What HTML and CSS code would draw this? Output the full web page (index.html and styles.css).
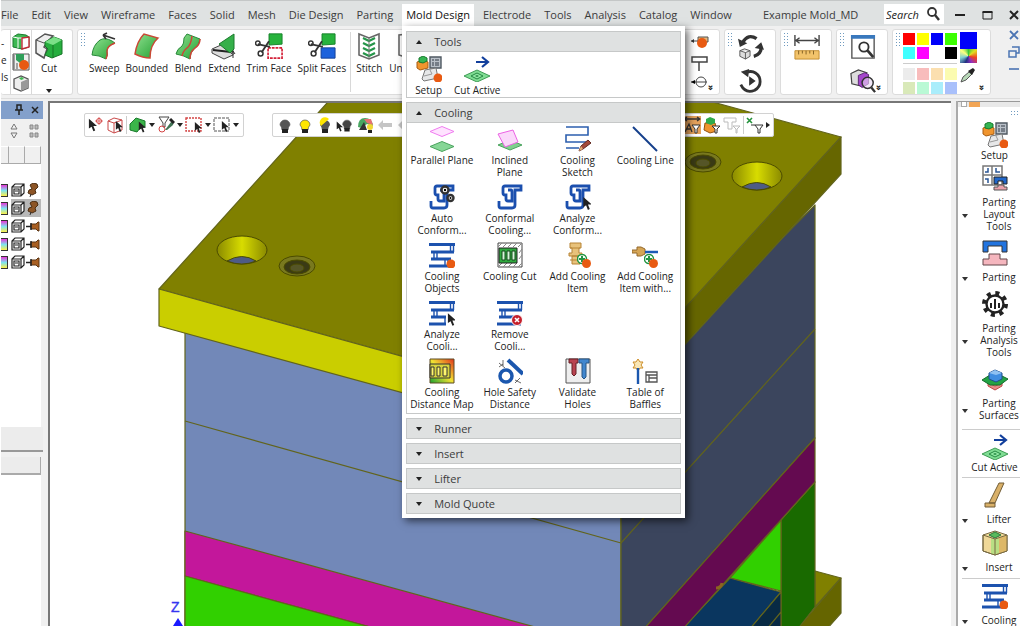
FILE: index.html
```html
<!DOCTYPE html>
<html lang="en">
<head>
<meta charset="utf-8">
<title>Example Mold_MD</title>
<link rel="stylesheet" href="styles.css">
</head>
<body>
<svg class="defs" aria-hidden="true">
  <defs>
    <linearGradient id="gr" x1="0" y1="0" x2="1" y2="1"><stop offset="0" stop-color="#8fe08f"/><stop offset="1" stop-color="#22a032"/></linearGradient>
    <linearGradient id="yl" x1="0" x2="1"><stop offset="0" stop-color="#8a8a00"/><stop offset=".5" stop-color="#d8dc00"/><stop offset="1" stop-color="#8a8a00"/></linearGradient>
    <linearGradient id="heat" x1="0" y1="1" x2="1" y2="0"><stop offset="0" stop-color="#16a030"/><stop offset=".5" stop-color="#f2e233"/><stop offset="1" stop-color="#e0301c"/></linearGradient>
  </defs>
  <symbol id="cursor" viewBox="0 0 10 14"><path d="M1 0v11l3-2 2 5 2-1-2-5h4z" fill="#222"/></symbol>
  <symbol id="setup" viewBox="0 0 26 26"><path d="M1 6l7-2 4 2v6l-8 2-3-2z" fill="#f0952e" stroke="#a85d12"/><path d="M3 6V2l4-2 4 2v3L7 7z" fill="#35b552" stroke="#177a2c"/><path d="M14 1h11v11H14z" fill="#b9c0c8" stroke="#4f5861" stroke-width="1.4"/><path d="M16 4h2m1 0h4m-7 3h2m1 0h4m-7 2h2m1 0h4" stroke="#333b46"/><path d="M9 14l11-2 2 10-14 3-2-2z" fill="#e6e7e8" stroke="#777"/><path d="M13 12l3 6-8 2" fill="none" stroke="#999"/><circle cx="22" cy="22" r="4.500" fill="#e85a12"/></symbol>
  <symbol id="cutactive" viewBox="0 0 26 26"><path d="M12 6h11M18 1l6 5-6 5" fill="none" stroke="#123f9c" stroke-width="2.2"/><path d="M0 20l13-6 13 6-13 6z" fill="#7fdc93" stroke="#3f9c55"/><path d="M7 20l6-3 6 3-6 3z" fill="#8fe7a2" stroke="#268943"/><path d="M11 20l2-1 2 1-2 1z" fill="#268943"/></symbol>
  <symbol id="parallel" viewBox="0 0 26 26"><path d="M1 5.500l12-5 12 5-12 5z" fill="#ffe3ff" stroke="#f07cf0"/><path d="M1 20.500l12-5 12 5-12 5z" fill="#86d696" stroke="#4aa35e"/></symbol>
  <symbol id="inclined" viewBox="0 0 26 26"><path d="M1 19l12-5 12 5-12 5z" fill="#7fd08e" stroke="#4aa35e"/><path d="M1 8l15-4 5 12-13 5z" fill="#fbd8fb" stroke="#ec62e4"/></symbol>
  <symbol id="sketch" viewBox="0 0 26 26"><path d="M1 1h22v8H1v7h22M1 22h13" fill="none" stroke="#2d5fae" stroke-width="1.600"/><path d="M14 25l2-5 7-6 3 3-8 6z" fill="#a44a3a" stroke="#632a22"/><path d="M14 25l2-5 2 3z" fill="#e5b078"/></symbol>
  <symbol id="line" viewBox="0 0 26 26"><path d="M1 1l24 24" stroke="#153f8b" stroke-width="2"/></symbol>
  <symbol id="conf" viewBox="0 0 26 26"><path d="M2 17v5q0 2 2 2h11q3 0 3-3V6h6V2H8Q6 2 6 4v5q0 2 2 2h1v4q0 2 2 2h4V8q0-2-1-2h-3" fill="none" stroke="#1b4fae" stroke-width="2.800"/></symbol>
  <symbol id="autoconf" viewBox="0 0 26 26"><use href="#conf"/><circle cx="16" cy="6" r="3.500" fill="#fff" stroke="#333" stroke-width="2.400"/><circle cx="16" cy="6" r="1.200"/><circle cx="21.500" cy="14" r="3" fill="#fff" stroke="#333" stroke-width="2.400"/><circle cx="21.500" cy="14" r="1"/></symbol>
  <symbol id="anconf" viewBox="0 0 26 26"><use href="#conf"/><use href="#cursor" x="17" y="13" width="10" height="13"/></symbol>
  <symbol id="pipes" viewBox="0 0 26 26"><path d="M0 2.500h26M2 10h23M2 17h20M0 24h24" fill="none" stroke="#1c52ae" stroke-width="3"/><path d="M21.500 3v7M24.500 3v7M5 10v7M8 10v7M16 17v7M19 17v7" fill="none" stroke="#1c52ae" stroke-width="1.400"/></symbol>
  <symbol id="objects" viewBox="0 0 26 26"><use href="#pipes"/><circle cx="22" cy="22" r="4.500" fill="#e85a12"/></symbol>
  <symbol id="analyze" viewBox="0 0 26 26"><use href="#pipes"/><path d="M17 12h9v14h-9z" fill="#fff"/><use href="#cursor" x="18" y="13" width="9" height="13"/></symbol>
  <symbol id="remove" viewBox="0 0 26 26"><use href="#pipes"/><circle cx="20" cy="20" r="5.500" fill="#c5202c" stroke="#fff"/><path d="M18 18l4 4m0-4l-4 4" stroke="#fff" stroke-width="1.600"/></symbol>
  <symbol id="cut" viewBox="0 0 26 26"><path d="M1 1h24v24H1z" fill="#fff" stroke="#444"/><path d="M1 5l4-4m1 4l4-4m1 4l4-4m1 4l4-4m1 4l4-4M1 25l4-4m1 4l4-4m1 4l4-4m1 4l4-4m1 4l4-4m-3-4l3-4m-3-2l3-4" stroke="#888"/><path d="M2 6h18v15H2z" fill="#2fa83e" stroke="#222"/><path d="M5 9h3v9H5zm5 0h3v9h-3zm5 0h3v9h-3z" fill="#d6f5d9" stroke="#16461d"/></symbol>
  <symbol id="plus" viewBox="0 0 14 14"><circle cx="5" cy="5" r="4.500" fill="#fff" stroke="#239544" stroke-width="1.500"/><path d="M5 2v6M2 5h6" stroke="#239544" stroke-width="2"/><circle cx="9.500" cy="9.500" r="4.500" fill="#e85a12"/></symbol>
  <symbol id="additem" viewBox="0 0 26 26"><path d="M5 1h11v5h-2v5h3v3H4v-3h3V6H5zM7 14h8v8H7z" fill="#e8c27b" stroke="#b78436"/><path d="M5 6h10M5 18h11" stroke="#b78436"/><use href="#plus" x="12" y="12" width="14" height="14"/></symbol>
  <symbol id="addwith" viewBox="0 0 26 26"><path d="M0 8h5V5h4l4 2v5l-4 2H5v-3H0z" fill="#d5a556" stroke="#94682a"/><path d="M13 10h13" stroke="#1c5ab5" stroke-width="2.500"/><use href="#plus" x="12" y="12" width="14" height="14"/></symbol>
  <symbol id="map" viewBox="0 0 26 26"><path d="M1 1h24v24H1z" fill="url(#heat)" stroke="#5d4b24"/><path d="M1 6h20v14H1z" fill="#d7d33f" stroke="#333"/><path d="M2 9h3v9H2zm6 0h3v9H8zm6 0h4v9h-4z" fill="#fff66d" stroke="#333"/></symbol>
  <symbol id="safety" viewBox="0 0 26 26"><circle cx="9" cy="18" r="6" fill="#fff" stroke="#1b57ae" stroke-width="3.500"/><path d="M11 2l15 14" stroke="#1b57ae" stroke-width="4"/><path d="M2 5l6 5M6 2v6m-4 1l4-3m12 16l6 3m-6 0l5-5" stroke="#444" stroke-width=".8"/></symbol>
  <symbol id="validate" viewBox="0 0 26 26"><path d="M1 1h24v24H1z" fill="#eee" stroke="#555"/><path d="M4 1h9v4h-2v11l-2 2-2-2V5H4z" fill="#b94350" stroke="#642027"/><path d="M14 1h10v4h-3v14l-2 2-2-2V5h-3z" fill="#4287ce" stroke="#285684"/></symbol>
  <symbol id="baffle" viewBox="0 0 26 26"><path d="M6 1l2 3h3L9 7l2 3H8l-2 3-2-3H1l2-3-2-3h3z" fill="#f9e7b7" stroke="#cc8d29"/><path d="M6 10v16" stroke="#1b57ae" stroke-width="2.400"/><path d="M14 14h11v10H14zM14 17h11m-8 0v7m0-4h8" fill="#fff" stroke="#555" stroke-width="1.300"/></symbol>

  <symbol id="cutcube" viewBox="0 0 28 28"><path d="M1 8l9-6 8 2-6 6-3 5 3 2-3 9-8-5z" fill="#eee" stroke="#555" stroke-width="1.500"/><path d="M1 8l8 3M9 11l3-1" stroke="#555"/><path d="M10 10l9-5 8 3v14l-10 4-7-3 3-6-3-3z" fill="#26ae3e" stroke="#167427"/><path d="M10 10l8 3 9-5-8-3z" fill="#7be088"/><path d="M18 13v13" stroke="#167427"/></symbol>
  <symbol id="sweep" viewBox="0 0 28 28"><path d="M2 23Q3 13 10 8q5-3 12 1 3 2 3 2-8 3-8 8 1 4-1 8-7-4-14-4z" fill="url(#gr)" stroke="#28893a"/><path d="M16 27q2-4 1-8 0-5 8-8" fill="none" stroke="#cf4337" stroke-width="1.400"/><path d="M13 3l12 4M13 3l4-2m-4 2l3 4" fill="none" stroke="#333" stroke-width="1.600"/></symbol>
  <symbol id="bounded" viewBox="0 0 28 28"><path d="M2 22Q4 9 11 2l14 4q-8 7-8 20-7 0-15-4z" fill="url(#gr)" stroke="#c94935" stroke-width="1.500"/></symbol>
  <symbol id="blend" viewBox="0 0 28 28"><path d="M2 22q1-5 6-8 2-2 2-8l3-4 13 5q0 6-6 10-4 3-4 10-7-4-14-5z" fill="url(#gr)" stroke="#28893a"/><path d="M8 24q1-5 5-8 4-3 5-12M16 27q0-7 4-10 6-4 6-10" fill="none" stroke="#cf4337" stroke-width="1.500"/></symbol>
  <symbol id="extend" viewBox="0 0 28 28"><path d="M2 17l9-4 12 5v5l-9 4-12-6z" fill="#ddd" stroke="#444"/><path d="M3 18l18 2" stroke="#222" stroke-width="2"/><path d="M9 12L24 2v15l-4 4z" fill="#35b04a" stroke="#1b7a2c"/><path d="M23 26v-7m-2 3l2-3 2 3" stroke="#333" fill="none"/></symbol>
  <symbol id="scissors" viewBox="0 0 16 28"><path d="M3 12l13 3M7 21l8-12" stroke="#333" stroke-width="2"/><circle cx="3" cy="11" r="2.400" fill="none" stroke="#333" stroke-width="1.600"/><circle cx="6" cy="22" r="2.600" fill="none" stroke="#333" stroke-width="1.600"/></symbol>
  <symbol id="trim" viewBox="0 0 30 28"><path d="M15 1h14v11l-14 1z" fill="#27b33c" stroke="#17802a"/><path d="M14 16h15v11H14z" fill="#fff" stroke="#d32038" stroke-width="1.800" stroke-dasharray="3 1"/><use href="#scissors" width="16" height="28"/></symbol>
  <symbol id="split" viewBox="0 0 30 28"><path d="M15 1h14v11l-14 1z" fill="#27b33c" stroke="#17802a"/><path d="M14 16h15v11H14z" fill="#1d62dc" stroke="#123e96"/><use href="#scissors" width="16" height="28"/></symbol>
  <symbol id="stitch" viewBox="0 0 28 28"><path d="M4 2l10 4 10-4v21l-10 4-10-4z" fill="#fff" stroke="#666" stroke-width="1.600"/><path d="M8 6l6 3 6-3M8 11l6 3 6-3M8 16l6 3 6-3M8 21l6 3 6-3" fill="none" stroke="#26964a" stroke-width="2.200"/><path d="M14 6v20" stroke="#777"/></symbol>
  <symbol id="unst" viewBox="0 0 28 28"><path d="M13 2l-9 1v20l9 3M16 2l9 1v20l-9 3" fill="none" stroke="#666" stroke-width="1.600"/></symbol>
  <symbol id="s1" viewBox="0 0 18 18"><path d="M1 5l5-3 8 1 3 2v10l-7 2-9-2z" fill="#3cb852" stroke="#197b2e"/><path d="M6 6h4v10M1 5l5 1v10" fill="none" stroke="#fff"/><path d="M10 6l7-1v10l-7 2z" fill="#fff" stroke="#c12b37" stroke-width="1.400"/></symbol>
  <symbol id="s2" viewBox="0 0 18 18"><path d="M1 1h16v16H1z" fill="#eee" stroke="#555"/><path d="M4 1h8v6l-4 3-4-3z" fill="#2f9f5a"/><path d="M2 2v14m3-6v6" stroke="#555"/><circle cx="12" cy="12" r="5" fill="#e85a12"/></symbol>
  <symbol id="s3" viewBox="0 0 18 18"><path d="M2 5l7-3 7 3v9l-7 3-7-3z" fill="#eee" stroke="#555" stroke-width="1.300"/><path d="M9 8l7-3v9l-7 3z" fill="#999"/><path d="M7 4l3-1 2 2-3 1z" fill="#3fb851"/></symbol>
  <symbol id="orbit" viewBox="0 0 28 28"><path d="M5 9Q11-1 20 5M25 14q0 8-8 10" fill="none" stroke="#333" stroke-width="3.600"/><path d="M0 5l2 9 8-4zM28 17l-3-8-7 6z" fill="#333"/><path d="M2 18l5-2 6 2v6l-5 3-6-3zM8 20v7m-6-9l6 2 5-2" fill="#ddd" stroke="#555"/></symbol>
  <symbol id="replay" viewBox="0 0 28 28"><path d="M8 5q10-4 15 5 3 9-5 14-10 4-15-6" fill="none" stroke="#333" stroke-width="3"/><path d="M3 4l9-3-1 9zM12 9l7 5-7 5z" fill="#333"/></symbol>
  <symbol id="ruler" viewBox="0 0 28 28"><path d="M1 1v12M27 1v12M2 7h24M6 4L2 7l4 3M22 4l4 3-4 3" fill="none" stroke="#444" stroke-width="1.500"/><path d="M1 18h26v9H1z" fill="#f2c36b" stroke="#c18a2c"/><path d="M5 18v4m4-4v3m4-3v4m4-4v3m4-3v4" stroke="#805d20"/></symbol>
  <symbol id="preview" viewBox="0 0 28 28"><path d="M2 2h24v24H2z" fill="#fff" stroke="#555" stroke-width="1.500"/><path d="M1 1h26v4H1z" fill="#3978bd"/><circle cx="15" cy="14" r="5" fill="none" stroke="#333" stroke-width="2"/><path d="M19 18l6 7" stroke="#333" stroke-width="3"/></symbol>
  <symbol id="find3d" viewBox="0 0 28 28"><path d="M1 6l8-4 9 3-4 4v11L2 17z" fill="#ddd" stroke="#444" stroke-width="1.300"/><path d="M9 8l7-3 4 2v10l-7 4-4-3z" fill="#a546cc" stroke="#562370"/><circle cx="19" cy="16" r="6" fill="#ead8f2" fill-opacity=".6" stroke="#333" stroke-width="1.600"/><path d="M23 21l4 5" stroke="#333" stroke-width="2.500"/></symbol>
  <symbol id="pipette" viewBox="0 0 16 16"><path d="M1 15l2-5 6-5 3 2-6 6z" fill="#b8d9b8" stroke="#555"/><path d="M8 4l4 4 3-5-2-2z" fill="#222"/></symbol>
  <symbol id="n1" viewBox="0 0 18 18"><path d="M0 8h7" stroke="#444"/><path d="M7 4h10v5H7z" fill="#e5b77a" stroke="#555"/><circle cx="11" cy="10" r="5" fill="#e85a12"/><path d="M0 8l3-2v4z" fill="#333"/></symbol>
  <symbol id="n2" viewBox="0 0 18 18"><path d="M1 4h15v5H1zM8 9v9" fill="none" stroke="#444" stroke-width="1.500"/></symbol>
  <symbol id="n3" viewBox="0 0 18 18"><path d="M0 9h16" stroke="#444"/><circle cx="10" cy="9" r="5" fill="none" stroke="#444"/><path d="M0 9l4-2v4z"/></symbol>

  <symbol id="layout" viewBox="0 0 26 26"><path d="M1 1h19v19H1zM10 1v19M1 10h19" fill="#fff" stroke="#777" stroke-width="1.500"/><path d="M3 7h3V3m8 0v4h4M3 14h3v4" fill="none" stroke="#2b5796" stroke-width="1.500"/><path d="M12 12h13v7h-4v-3h-5v3h-4z" fill="#2167ca" stroke="#222"/><path d="M12 25v-3h4v-2h6v2h3v3z" fill="#eaa2ac" stroke="#555"/></symbol>
  <symbol id="parting" viewBox="0 0 26 26"><path d="M1 1h24v11h-5V6H6v6H1z" fill="#2274df" stroke="#333"/><path d="M1 25v-6h6v-5h11v5h7v6z" fill="#f5b6be" stroke="#63474a"/></symbol>
  <symbol id="gear" viewBox="0 0 26 26"><circle cx="13" cy="13" r="11" fill="none" stroke="#222" stroke-width="4" stroke-dasharray="4 4.640"/><circle cx="13" cy="13" r="8.500" fill="#fff" stroke="#222" stroke-width="2.400"/><path d="M9 12v5m4-9v10m4-6v5" stroke="#222" stroke-width="2"/></symbol>
  <symbol id="surfaces" viewBox="0 0 26 26"><path d="M6 17l7 3 7-3v3l-7 4-7-4z" fill="#e58d89" stroke="#c04644"/><path d="M0 14l8-5h10l8 4-8 6H8z" fill="#23a344" stroke="#156c2b"/><path d="M7 7l6-3 7 3v6l-6 3-7-3z" fill="#408de0" stroke="#204e8a"/><path d="M7 7l7 2 6-2-7-3z" fill="#8fc1f2"/></symbol>
  <symbol id="lifter" viewBox="0 0 26 26"><path d="M17 1h5l-9 20H7zM3 21h10v4H3z" fill="#d9b068" stroke="#725d36"/></symbol>
  <symbol id="insert" viewBox="0 0 26 26"><path d="M1 5l12-4 12 4v16l-12 4-12-4z" fill="#efd898" stroke="#786a43"/><path d="M13 9l12-4v16l-12 4z" fill="#ddb868"/><path d="M9 8l4 1 4-1v15l-4 2-4-1z" fill="#b9df84"/><path d="M7 5l6-3 6 3-6 3z" fill="#58ba5c" stroke="#28773c"/><path d="M1 5l12 4 12-4M13 9v16M1 5v16l12 4 12-4V5" fill="none" stroke="#786a43"/></symbol>

  <symbol id="pick1" viewBox="0 0 18 18"><use href="#cursor" x="2" y="2" width="9" height="14"/><circle cx="13" cy="5" r="2.500" fill="none" stroke="#d34444"/><path d="M13 1v8M9 5h8" stroke="#d34444" stroke-width=".7"/></symbol>
  <symbol id="pick2" viewBox="0 0 18 18"><path d="M2 5l6-3 8 2v10l-8 3-6-3zM2 5l6 2 8-3M8 7v10" fill="#fff" stroke="#c94949"/><use href="#cursor" x="9" y="5" width="8" height="11"/></symbol>
  <symbol id="pick3" viewBox="0 0 18 18"><path d="M1 14V8l6-6 9 3v6l-5 1-3 4z" fill="#3bb54a" stroke="#1b7b2d"/><use href="#cursor" x="9" y="5" width="8" height="12"/></symbol>
  <symbol id="pick4" viewBox="0 0 18 18"><path d="M2 1h10L8 7v4H6V7z" fill="#fff" stroke="#444"/><circle cx="5" cy="13" r="3" fill="none" stroke="#d34444"/><path d="M8 14l6-8 3-1-1 4-6 5z" fill="#427556"/><path d="M13 3l4 4" stroke="#222" stroke-width="3"/></symbol>
  <symbol id="pick5" viewBox="0 0 18 18"><path d="M1 2h15v13H1z" fill="none" stroke="#d34444" stroke-width="1.400" stroke-dasharray="2 1"/><use href="#cursor" x="9" y="6" width="8" height="11"/></symbol>
  <symbol id="pick6" viewBox="0 0 18 18"><path d="M1 2h15v13H1z" fill="none" stroke="#555" stroke-dasharray="3 1"/><use href="#cursor" x="8" y="5" width="8" height="11"/></symbol>
  <symbol id="bulb" viewBox="0 0 16 18"><path d="M5 14q0-3-2-5a5 5 0 1 1 10 0q-2 2-2 5z" stroke="#555" stroke-width=".7"/><path d="M5 13h6v4H5z" fill="#222"/></symbol>
  <symbol id="half" viewBox="0 0 16 18"><path d="M5 14q0-3-2-5a5 5 0 1 1 10 0q-2 2-2 5z" fill="#555"/><path d="M4 10a5 5 0 0 1 8-7z" fill="#ffe600"/><path d="M5 13h6v4H5z" fill="#222"/></symbol>
  <symbol id="bulbcur" viewBox="0 0 18 18"><use href="#bulb" x="4" fill="#444" width="14" height="17"/><use href="#cursor" x="0" y="5" width="7" height="11"/></symbol>
  <symbol id="palette" viewBox="0 0 18 18"><path d="M2 11Q2 2 9 2t8 8l-6-2-5 4z" fill="#48a661"/><path d="M8 3h7l2 6-6-2z" fill="#e67171"/><path d="M3 14l5-8 3 8z" fill="#333"/><circle cx="14" cy="11" r="3" fill="#f1d733"/><path d="M12 14h4v3h-4z" fill="#222"/></symbol>
  <symbol id="back" viewBox="0 0 16 18"><path d="M1 9l5-5v3h9v4H6v3z" fill="#c5c5c5"/></symbol>
  <symbol id="dimfilt" viewBox="0 0 18 18"><path d="M1 3h16M4 1L1 3l3 2m10-4l3 2-3 2M2 16L6 8l3 8m-5-3h4" fill="none" stroke="#333" stroke-width="1.300"/><path d="M9 9h8l-3 4v4h-2v-4z" fill="#fff" stroke="#333"/></symbol>
  <symbol id="objfilt" viewBox="0 0 18 18"><path d="M2 7h10l2 8-7 2-6-3z" fill="#f0952e" stroke="#935110"/><path d="M3 7V3l4-2 5 2v4l-4 2z" fill="#2fab4b"/><path d="M9 10h8l-3 3v4h-2v-4z" fill="#fff" stroke="#333"/></symbol>
  <symbol id="textfilt" viewBox="0 0 18 18"><path d="M1 2h12v4H9v7H5V6H1zM10 10h7l-3 3v4h-1v-4z" fill="#fff" stroke="#bbb"/></symbol>
  <symbol id="ptfilt" viewBox="0 0 18 18"><path d="M1 2l5 5m0-5L1 7" stroke="#23923b" stroke-width="1.600"/><path d="M5 9h4M9 9h8l-3 4v4h-2v-4z" fill="#fff" stroke="#333"/></symbol>
  <symbol id="box" viewBox="0 0 14 14"><path d="M1 4l3-3h9v9l-3 3H1zM1 4h9v9M10 4l3-3M3 6h5v5H3zM4 8h3" fill="#fff" stroke="#222" stroke-width="1.200"/></symbol>
  <symbol id="pinup" viewBox="0 0 14 14"><path d="M4 2l3-2 4 1 1 3-3 3 1 3-4 2-4-2 1-3 3-1z" fill="#8d5526" stroke="#4c2e12"/><path d="M5 11l-1 3" stroke="#333"/></symbol>
  <symbol id="pinside" viewBox="0 0 14 14"><path d="M5 5h5l2-2h1v9h-1l-2-2H5z" fill="#a85f22" stroke="#5b3412"/><path d="M0 7.500h5M5 4v7" stroke="#222" stroke-width="1.500"/></symbol>
</svg>

<div class="app">
  <header class="menubar">
    <nav class="menus">
      <button>File</button><button>Edit</button><button>View</button><button>Wireframe</button><button>Faces</button><button>Solid</button><button>Mesh</button><button>Die Design</button><button>Parting</button>
      <div class="tab">
        <button class="active" aria-expanded="true">Mold Design</button>
        <div class="dropdown">
          <section class="section">
            <button class="head"><i class="up"></i>Tools</button>
            <div class="tools">
              <button class="tile"><svg><use href="#setup"/></svg>Setup</button>
              <button class="tile"><svg><use href="#cutactive"/></svg>Cut Active</button>
            </div>
          </section>
          <section class="section">
            <button class="head"><i class="up"></i>Cooling</button>
            <div class="tiles">
              <button class="tile"><svg><use href="#parallel"/></svg>Parallel Plane</button>
              <button class="tile"><svg><use href="#inclined"/></svg>Inclined<br>Plane</button>
              <button class="tile"><svg><use href="#sketch"/></svg>Cooling<br>Sketch</button>
              <button class="tile"><svg><use href="#line"/></svg>Cooling Line</button>
              <button class="tile"><svg><use href="#autoconf"/></svg>Auto<br>Conform...</button>
              <button class="tile"><svg><use href="#conf"/></svg>Conformal<br>Cooling...</button>
              <button class="tile"><svg><use href="#anconf"/></svg>Analyze<br>Conform...</button>
              <button class="tile first"><svg><use href="#objects"/></svg>Cooling<br>Objects</button>
              <button class="tile"><svg><use href="#cut"/></svg>Cooling Cut</button>
              <button class="tile"><svg><use href="#additem"/></svg>Add Cooling<br>Item</button>
              <button class="tile"><svg><use href="#addwith"/></svg>Add Cooling<br>Item with...</button>
              <button class="tile"><svg><use href="#analyze"/></svg>Analyze<br>Cooli...</button>
              <button class="tile"><svg><use href="#remove"/></svg>Remove<br>Cooli...</button>
              <button class="tile first"><svg><use href="#map"/></svg>Cooling<br>Distance Map</button>
              <button class="tile"><svg><use href="#safety"/></svg>Hole Safety<br>Distance</button>
              <button class="tile"><svg><use href="#validate"/></svg>Validate<br>Holes</button>
              <button class="tile"><svg><use href="#baffle"/></svg>Table of<br>Baffles</button>
            </div>
          </section>
          <section class="section"><button class="head"><i class="down"></i>Runner</button></section>
          <section class="section"><button class="head"><i class="down"></i>Insert</button></section>
          <section class="section"><button class="head"><i class="down"></i>Lifter</button></section>
          <section class="section"><button class="head"><i class="down"></i>Mold Quote</button></section>
        </div>
      </div>
      <button>Electrode</button><button>Tools</button><button>Analysis</button><button>Catalog</button><button>Window</button>
    </nav>
    <span class="doc">Example Mold_MD</span>
    <label class="search"><input type="text" placeholder="Search" aria-label="Search"><svg viewBox="0 0 14 14"><circle cx="6" cy="5" r="4" fill="none" stroke="#333" stroke-width="1.800"/><path d="M9 8l4 5" stroke="#333" stroke-width="2.400"/></svg></label>
    <div class="winbtns">
      <button aria-label="Minimize"><svg viewBox="0 0 12 12"><path d="M1 6h10" stroke="#222" stroke-width="2"/></svg></button>
      <button aria-label="Maximize"><svg viewBox="0 0 12 12"><path d="M2 3h9v7H2z" fill="none" stroke="#222"/><path d="M1.500 3h10" stroke="#222" stroke-width="2"/></svg></button>
      <button aria-label="Close"><svg viewBox="0 0 12 12"><path d="M2 2l8 8m0-8l-8 8" stroke="#222" stroke-width="2"/></svg></button>
    </div>
  </header>

  <div class="ribbon">
    <div class="group g-first">
      <div class="stubs"><span>-</span><span>e</span><span>ls</span></div>
      <div class="small"><svg><use href="#s1"/></svg><svg><use href="#s2"/></svg><svg><use href="#s3"/></svg></div>
      <button class="rtool cutbtn"><svg><use href="#cutcube"/></svg>Cut<i class="down"></i></button>
    </div>
    <div class="group g-wide">
      <i class="grip"></i>
      <div class="rtools">
        <button class="rtool"><svg><use href="#sweep"/></svg>Sweep</button>
        <button class="rtool"><svg><use href="#bounded"/></svg>Bounded</button>
        <button class="rtool"><svg><use href="#blend"/></svg>Blend</button>
        <button class="rtool"><svg><use href="#extend"/></svg>Extend</button>
        <button class="rtool"><svg><use href="#trim"/></svg>Trim Face</button>
        <button class="rtool"><svg><use href="#split"/></svg>Split Faces</button>
        <i class="vline"></i>
        <button class="rtool"><svg><use href="#stitch"/></svg>Stitch</button>
        <button class="rtool"><svg><use href="#unst"/></svg>Unstitch</button>
      </div>
      <div class="small notes"><svg><use href="#n1"/></svg><svg><use href="#n2"/></svg><svg><use href="#n3"/></svg></div>
      <b class="more">»</b>
    </div>
    <div class="group g-mid"><i class="grip"></i><div class="pair"><svg><use href="#orbit"/></svg><svg><use href="#replay"/></svg></div></div>
    <div class="group g-mid"><i class="grip"></i><div class="pair"><svg><use href="#ruler"/></svg></div></div>
    <div class="group g-mid"><i class="grip"></i><div class="pair"><svg><use href="#preview"/></svg><svg><use href="#find3d"/></svg></div><b class="more">»</b></div>
    <div class="group g-color"><i class="grip"></i>
      <div class="swatches">
        <div class="row bright"><i class="c1"></i><i class="c2"></i><i class="c3"></i><i class="c4"></i><i class="c5"></i><i class="c6"></i><i class="c7"></i><i class="c8"></i></div>
        <div class="row"><i class="p1"></i><i class="p2"></i><i class="p3"></i><i class="p4"></i><i class="p5"></i><i class="p6"></i><i class="p7"></i><i class="p8"></i></div>
      </div>
      <div class="current"><i class="c3"></i><i class="wheel"></i><svg><use href="#pipette"/></svg></div>
      <b class="more">»</b>
    </div>
    <div class="mdi">
      <svg viewBox="0 0 12 12"><path d="M2 2l8 8m0-8l-8 8" stroke="#4b74b3" stroke-width="1.800"/></svg>
      <svg viewBox="0 0 12 12"><path d="M4 1h7v6H8M1 5h7v6H1z" fill="none" stroke="#4b74b3" stroke-width="1.500"/></svg>
      <svg viewBox="0 0 12 12"><path d="M1 6h10" stroke="#4b74b3" stroke-width="1.600"/></svg>
    </div>
  </div>

  <main class="work">
    <aside class="tree">
      <div class="title"><svg viewBox="0 0 10 12"><path d="M3 1h4v5H3zM1 6h8M5 6v5" fill="none" stroke="#222" stroke-width="1.500"/></svg><svg viewBox="0 0 10 12"><path d="M2 3l6 6m0-6L2 9" stroke="#222" stroke-width="1.500"/></svg></div>
      <div class="treebar"><svg viewBox="0 0 12 16"><path d="M3 6l3-5 3 5zM3 10l3 5 3-5z" fill="none" stroke="#777"/></svg><svg viewBox="0 0 12 16"><path d="M2 2h3v4H2zm5 0h3v4H7zM2 10h3v4H2zm5 0h3v4H7z" fill="#bbb" stroke="#888"/></svg></div>
      <div class="cols"><i></i><i></i><i></i></div>
      <ul class="rows">
        <li><i class="hue"></i><svg><use href="#box"/></svg><svg><use href="#pinup"/></svg></li>
        <li class="sel"><i class="hue"></i><svg><use href="#box"/></svg><svg><use href="#pinup"/></svg></li>
        <li><i class="hue"></i><svg><use href="#box"/></svg><svg><use href="#pinside"/></svg></li>
        <li><i class="hue"></i><svg><use href="#box"/></svg><svg><use href="#pinside"/></svg></li>
        <li><i class="hue"></i><svg><use href="#box"/></svg><svg><use href="#pinside"/></svg></li>
      </ul>
      <div class="foot"></div>
      <div class="field"></div>
      <div class="blank"></div>
    </aside>

    <div class="canvas">
      <svg class="model" viewBox="50 103 901 523" preserveAspectRatio="xMidYMin slice" role="img" aria-label="Mold base model">
        <g stroke="#62641c" stroke-width="1.200" stroke-linejoin="round">
          <path d="M815 571l26 7-26 29z" fill="#808000"/>
          <path d="M841 578l-45 52h30l15-17z" fill="#656500"/>
          <path d="M781 520l34-38v125l-18 23h-16z" fill="#196a00"/>
          <path d="M781 520v71l-51-13z" fill="#31d000"/>
          <path d="M730 578l51 14-32 38h-68z" fill="#0a365f"/>
          <path d="M781 592l-32 38h32zm0 20l-15 18" fill="#082a44"/>
          <path d="M185 320l436 100v210H185z" fill="#7288b8"/>
          <path d="M621 400l194-195v233L643 630h-22z" fill="#3b455d"/>
          <path d="M185 421l436 122 194-214" fill="none"/>
          <path d="M185 531v45l196 54h165z" fill="#c3179b"/>
          <path d="M185 576l196 54H185z" fill="#31d000"/>
          <path d="M815 438v44L682 630h-39z" fill="#640a50"/>
          <path d="M716 588q5 0 6-5" fill="none" stroke="#8b6420" stroke-width="3"/>
          <path d="M159 289l168-186V95h360l154 42-248 272z" fill="#808000"/>
          <path d="M159 289l434 120v36L159 326z" fill="#cace00"/>
          <path d="M841 137v37L593 445v-36z" fill="#666600"/>
        </g>
        <g stroke="#4b4b00">
          <ellipse cx="242" cy="250" rx="25" ry="14" fill="url(#yl)"/><path d="M227 261q15-9 29 0-14 6-29 0z" fill="#4e5b86"/>
          <ellipse cx="757" cy="176" rx="25" ry="14" fill="url(#yl)"/><path d="M742 187q15-9 29 0-14 6-29 0z" fill="#4e5b86"/>
          <ellipse cx="297" cy="266" rx="18" ry="10" fill="#79791f"/><ellipse cx="297" cy="267" rx="13" ry="7" fill="#3a3a15"/><ellipse cx="297" cy="268" rx="7" ry="4" fill="#555527"/>
          <ellipse cx="703" cy="162" rx="18" ry="10" fill="#79791f"/><ellipse cx="703" cy="162" rx="13" ry="7" fill="#3a3a15"/><ellipse cx="703" cy="163" rx="7" ry="4" fill="#555527"/>
        </g>
        <text class="axis" x="171" y="612">Z</text>
        <path d="M178 618l5 8h-10z" fill="#1a1aff"/>
      </svg>
      <div class="float pick">
        <svg><use href="#pick1"/></svg><svg><use href="#pick2"/></svg><i class="sep"></i>
        <svg><use href="#pick3"/></svg><i class="down"></i><svg><use href="#pick4"/></svg><i class="down"></i><svg><use href="#pick5"/></svg><i class="down"></i><svg><use href="#pick6"/></svg><i class="down"></i>
      </div>
      <div class="float show">
        <svg fill="#555"><use href="#bulb"/></svg><svg fill="#ffe600"><use href="#bulb"/></svg><svg><use href="#half"/></svg><svg><use href="#bulbcur"/></svg><svg><use href="#palette"/></svg><svg><use href="#back"/></svg><svg><use href="#back"/></svg>
        <span class="filters"><svg class="on"><use href="#dimfilt"/></svg><svg><use href="#objfilt"/></svg><svg><use href="#textfilt"/></svg><i class="sep"></i><svg><use href="#ptfilt"/></svg><i class="right"></i></span>
      </div>
    </div>

    <aside class="side">
      <div class="strip"><i></i><i class="orange"></i></div>
      <i class="hgrip"></i>
      <button class="stool"><svg><use href="#setup"/></svg><span>Setup</span></button>
      <button class="stool arrow"><svg><use href="#layout"/></svg><span>Parting<br>Layout<br>Tools</span></button>
      <button class="stool arrow"><svg><use href="#parting"/></svg><span>Parting</span></button>
      <button class="stool arrow"><svg><use href="#gear"/></svg><span>Parting<br>Analysis<br>Tools</span></button>
      <button class="stool arrow"><svg><use href="#surfaces"/></svg><span>Parting<br>Surfaces</span></button>
      <hr>
      <button class="stool"><svg><use href="#cutactive"/></svg><span>Cut Active</span></button>
      <hr>
      <button class="stool arrow tight"><svg><use href="#lifter"/></svg><span>Lifter</span></button>
      <button class="stool arrow tight"><svg><use href="#insert"/></svg><span>Insert</span></button>
      <hr>
      <button class="stool arrow tight"><svg><use href="#objects"/></svg><span>Cooling</span></button>
    </aside>
  </main>
</div>
</body>
</html>
```

FILE: styles.css
```css
* { box-sizing: border-box; }
body {
  margin: 0;
  padding: 0 4px 5px 1px;
  height: 100vh;
  background: #fff;
  color: #222;
  font: 10px/12px "Open Sans", "Noto Sans", sans-serif;
  overflow: hidden;
}
button {
  margin: 0; padding: 0; border: 0;
  background: none; color: inherit;
  font: inherit; white-space: nowrap;
}
svg { display: block; flex: none; }
.defs { position: absolute; width: 0; height: 0; }
.app { display: flex; flex-direction: column; height: 100%; background: #f0f0f0; overflow: hidden; }

.down, .up, .right { width: 0; height: 0; flex: none; border: 3px solid transparent; }
.down { border-top: 4px solid #222; border-bottom: 0; }
.up { border-bottom: 4px solid #222; border-top: 0; }
.right { border-left: 4px solid #222; border-right: 0; }

/* menu bar */
.menubar {
  display: flex; align-items: stretch; flex: none;
  height: 26px; padding-top: 3px;
  background: #dfe2e2; border-top: 1px solid #c4c7c7;
  font-size: 11px; color: #3c3c3c;
  position: relative; z-index: 5;
}
.menus { display: flex; margin-left: -6px; }
.menus > button { padding: 0 7px 0 6px; }
.tab { position: relative; display: flex; margin: 0 3px 0 2px; }
.active { background: #fff; padding: 0 4px; color: #111; }
.doc { margin-left: 24px; align-self: center; white-space: nowrap; }
.search {
  display: flex; align-items: center; flex: none;
  width: 60px; height: 20px; margin-left: auto; padding: 0 4px 0 2px;
  background: #fff;
}
.search input {
  flex: 1; min-width: 0; padding: 0; border: 0; background: none;
  font: italic 11px "Open Sans", "Noto Sans", sans-serif;
}
.search input::placeholder { color: #222; opacity: 1; }
.search svg { width: 14px; height: 14px; }
.winbtns { display: flex; align-items: center; gap: 15px; margin-left: 10px; }
.winbtns svg { width: 12px; height: 12px; }

/* drop-down panel */
.dropdown {
  position: absolute; top: 100%; left: 0; z-index: 10;
  display: flex; flex-direction: column; gap: 4px;
  width: 283px; padding: 5px 4px 4px;
  background: #fff; box-shadow: 3px 3px 8px rgba(0,0,0,.6);
  font-size: 10px; color: #222;
}
.section { border: 1px solid #c6c8c8; }
.head {
  display: flex; align-items: center; gap: 12px;
  width: 100%; height: 19px; padding-left: 9px;
  background: #dfe1e1; font-size: 11px; color: #3c3c3c;
}
.tools { display: flex; gap: 12px; height: 46px; padding: 1px 8px 0; border-top: 1px solid #c6c8c8; }
.tiles { display: grid; grid-template-columns: repeat(4, minmax(0, 1fr)); padding: 0 1px; border-top: 1px solid #c6c8c8; }
.tiles .tile { height: 58px; }
.tile { display: flex; flex-direction: column; align-items: center; padding-top: 3px; text-align: center; }
.tile svg { width: 26px; height: 26px; margin-bottom: 2px; }
.first { grid-column: 1; }

/* ribbon */
.ribbon { display: flex; gap: 4px; flex: none; height: 72px; padding: 3px 0; background: #f0f0f0; }
.group { position: relative; display: flex; flex: none; padding: 2px; background: #fff; border: 1px solid #dcdcdc; border-radius: 3px; overflow: hidden; }
.g-first { width: 72px; padding: 0; border-left: 0; }
.stubs { display: flex; flex-direction: column; justify-content: space-around; width: 9px; padding: 4px 0 8px; }
.small { display: flex; flex-direction: column; justify-content: space-around; padding: 0 2px; }
.small svg { width: 18px; height: 18px; }
.g-first .small { border: solid #d8d8d8; border-width: 0 1px; padding: 0 1px; }
.rtool { display: flex; flex-direction: column; align-items: center; }
.rtool svg { width: 28px; height: 28px; margin-bottom: 2px; }
.cutbtn { flex: 1; padding: 2px 6px 0 0; }
.cutbtn .down { margin-top: 15px; }
.g-wide { flex: 1; min-width: 0; }
.rtools { display: flex; gap: 6px; min-width: 0; flex: 1; padding-left: 2px; overflow: hidden; }
.vline { width: 1px; margin: 0 -2px; background: #d8d8d8; }
.grip {
  flex: none; width: 7px; height: 14px;
  background: radial-gradient(circle, #6f9bc0 1px, transparent 1px) 0 0 / 3px 3px;
}
.notes { margin-right: 6px; }
.more { position: absolute; right: 3px; bottom: 3px; font-size: 9px; line-height: 10px; writing-mode: vertical-rl; }
.g-mid { width: 52px; }
.pair { display: flex; flex-direction: column; gap: 8px; padding: 2px 4px; }
.pair svg { width: 26px; height: 26px; }
.g-color { width: 99px; }
.swatches { display: flex; flex-direction: column; gap: 4px; padding: 1px 0 0 1px; }
.row { display: grid; grid-template-columns: repeat(4, 12px); grid-auto-rows: 12px; gap: 2px; }
.bright { padding-bottom: 4px; border-bottom: 1px solid #ccc; }
.current { display: flex; flex-direction: column; margin-left: 3px; }
.current i { width: 17px; height: 17px; }
.current .wheel { height: 14px; background: conic-gradient(#38c838, #e0e020, #f04020, #9030c0, #203080, #80d0d0, #ffff80, #38c838); }
.current svg { width: 16px; height: 16px; margin-top: 4px; }
.c1 { background: #f00; } .c2 { background: #ff0; } .c3 { background: #0000fa; } .c4 { background: #3cff00; }
.c5 { background: #3fffff; } .c6 { background: #f0f; } .c7 { background: #fff; } .c8 { background: #000; }
.p1 { background: #ececec; } .p2 { background: #f8bcbc; } .p3 { background: #fbdfaf; } .p4 { background: #fbfbb0; }
.p5 { background: #d9e9b9; } .p6 { background: #b9f9d5; } .p7 { background: #a9edfb; } .p8 { background: #a9c0fb; }
.mdi { display: flex; flex-direction: column; align-items: flex-end; gap: 5px; flex: none; width: 25px; }
.mdi svg { width: 12px; height: 12px; }

/* work area */
.work { display: flex; flex: 1; min-height: 0; padding-top: 2px; border-top: 1px solid #ddd; }
.tree { display: flex; flex-direction: column; flex: none; width: 47px; padding-right: 5px; }
.title { display: flex; justify-content: flex-end; gap: 6px; padding: 3px; height: 18px; background: #83a0cb; }
.title svg { width: 10px; height: 12px; }
.treebar { display: flex; justify-content: flex-end; gap: 8px; height: 27px; padding: 4px 3px; }
.treebar svg { width: 12px; height: 16px; }
.cols { display: grid; grid-template-columns: 8px 1fr 1fr; height: 18px; margin-right: 2px; }
.cols i { border: solid #aaa; border-width: 0 1px 1px 0; border-top: 1px solid #fff; }
.rows { flex: 1; margin: 0 2px 0 0; padding: 17px 0 0; list-style: none; background: #fff; }
.rows li { display: flex; align-items: center; gap: 1px; height: 18px; }
.rows li svg { width: 14px; height: 14px; }
.hue { flex: none; width: 7px; height: 13px; margin-right: 2px; border: 1px solid #333; border-left: 0; background: linear-gradient(#e838d8, #7de4f0 50%, #fff04a); }
.sel { background: linear-gradient(90deg, #fff 10px, #b8b8b8 10px); }
.foot { height: 25px; border-bottom: 2px solid #999; background: #ececec; }
.field { height: 18px; margin: 5px 2px 0 0; border: solid #aaa; border-width: 0 1px 2px 0; background: #ececec; }
.blank { height: 151px; background: #fff; margin-right: 2px; }

.canvas { position: relative; flex: 1; min-width: 0; background: #fff; border: solid #777; border-width: 2px 0 0 2px; overflow: hidden; }
.model { width: 100%; height: 100%; }
.axis { font: 14px "Liberation Sans", sans-serif; fill: #3535f0; stroke: #3535f0; stroke-width: .4px; }
.float { position: absolute; top: 10px; display: flex; align-items: center; height: 24px; padding: 0 3px; background: #fff; border: 1px solid #d2d2d2; border-radius: 2px; }
.float svg { width: 18px; height: 18px; }
.pick { left: 34px; gap: 2px; padding: 0 4px 0 1px; }
.show { left: 222px; width: 502px; gap: 2px; }
.sep { width: 1px; height: 18px; background: #ccc; }
.filters { display: flex; align-items: center; gap: 2px; margin-left: auto; }
.on { background: #e5a25c; }

.side { display: flex; flex-direction: column; flex: none; width: 64px; margin-left: 5px; background: #fff; border-left: 2px solid #aaa; overflow: hidden; }
.strip { display: flex; gap: 2px; flex: none; height: 6px; padding-left: 3px; background: #e9e9e9; border-top: 1px solid #999; }
.strip i { width: 6px; background: #fff; border: 1px solid #aaa; border-top: 0; }
.strip .orange { width: 11px; background: #f2a555; border: 0; }
.hgrip { flex: none; align-self: flex-end; width: 9px; height: 7px; margin: 3px 1px 5px; background: radial-gradient(circle, #6f9bc0 1px, transparent 1px) 0 0 / 3px 3px; }
.side hr { flex: none; width: 58px; height: 1px; margin: 0 0 4px 4px; border: 0; background: #ccc; }
.stool { display: flex; flex-direction: column; align-items: center; flex: none; padding: 0 0 4px 11px; }
.stool svg { width: 26px; height: 26px; margin-bottom: 1px; }
.stool span { position: relative; }
.arrow { padding-bottom: 8px; }
.arrow svg { margin-bottom: 5px; }
.arrow span { align-self: stretch; padding-left: 9px; }
.arrow span::before { content: ""; position: absolute; left: -7px; top: 50%; border: 3px solid transparent; border-top: 4px solid #333; border-bottom: 0; }
.tight { padding-bottom: 5px; }
```
